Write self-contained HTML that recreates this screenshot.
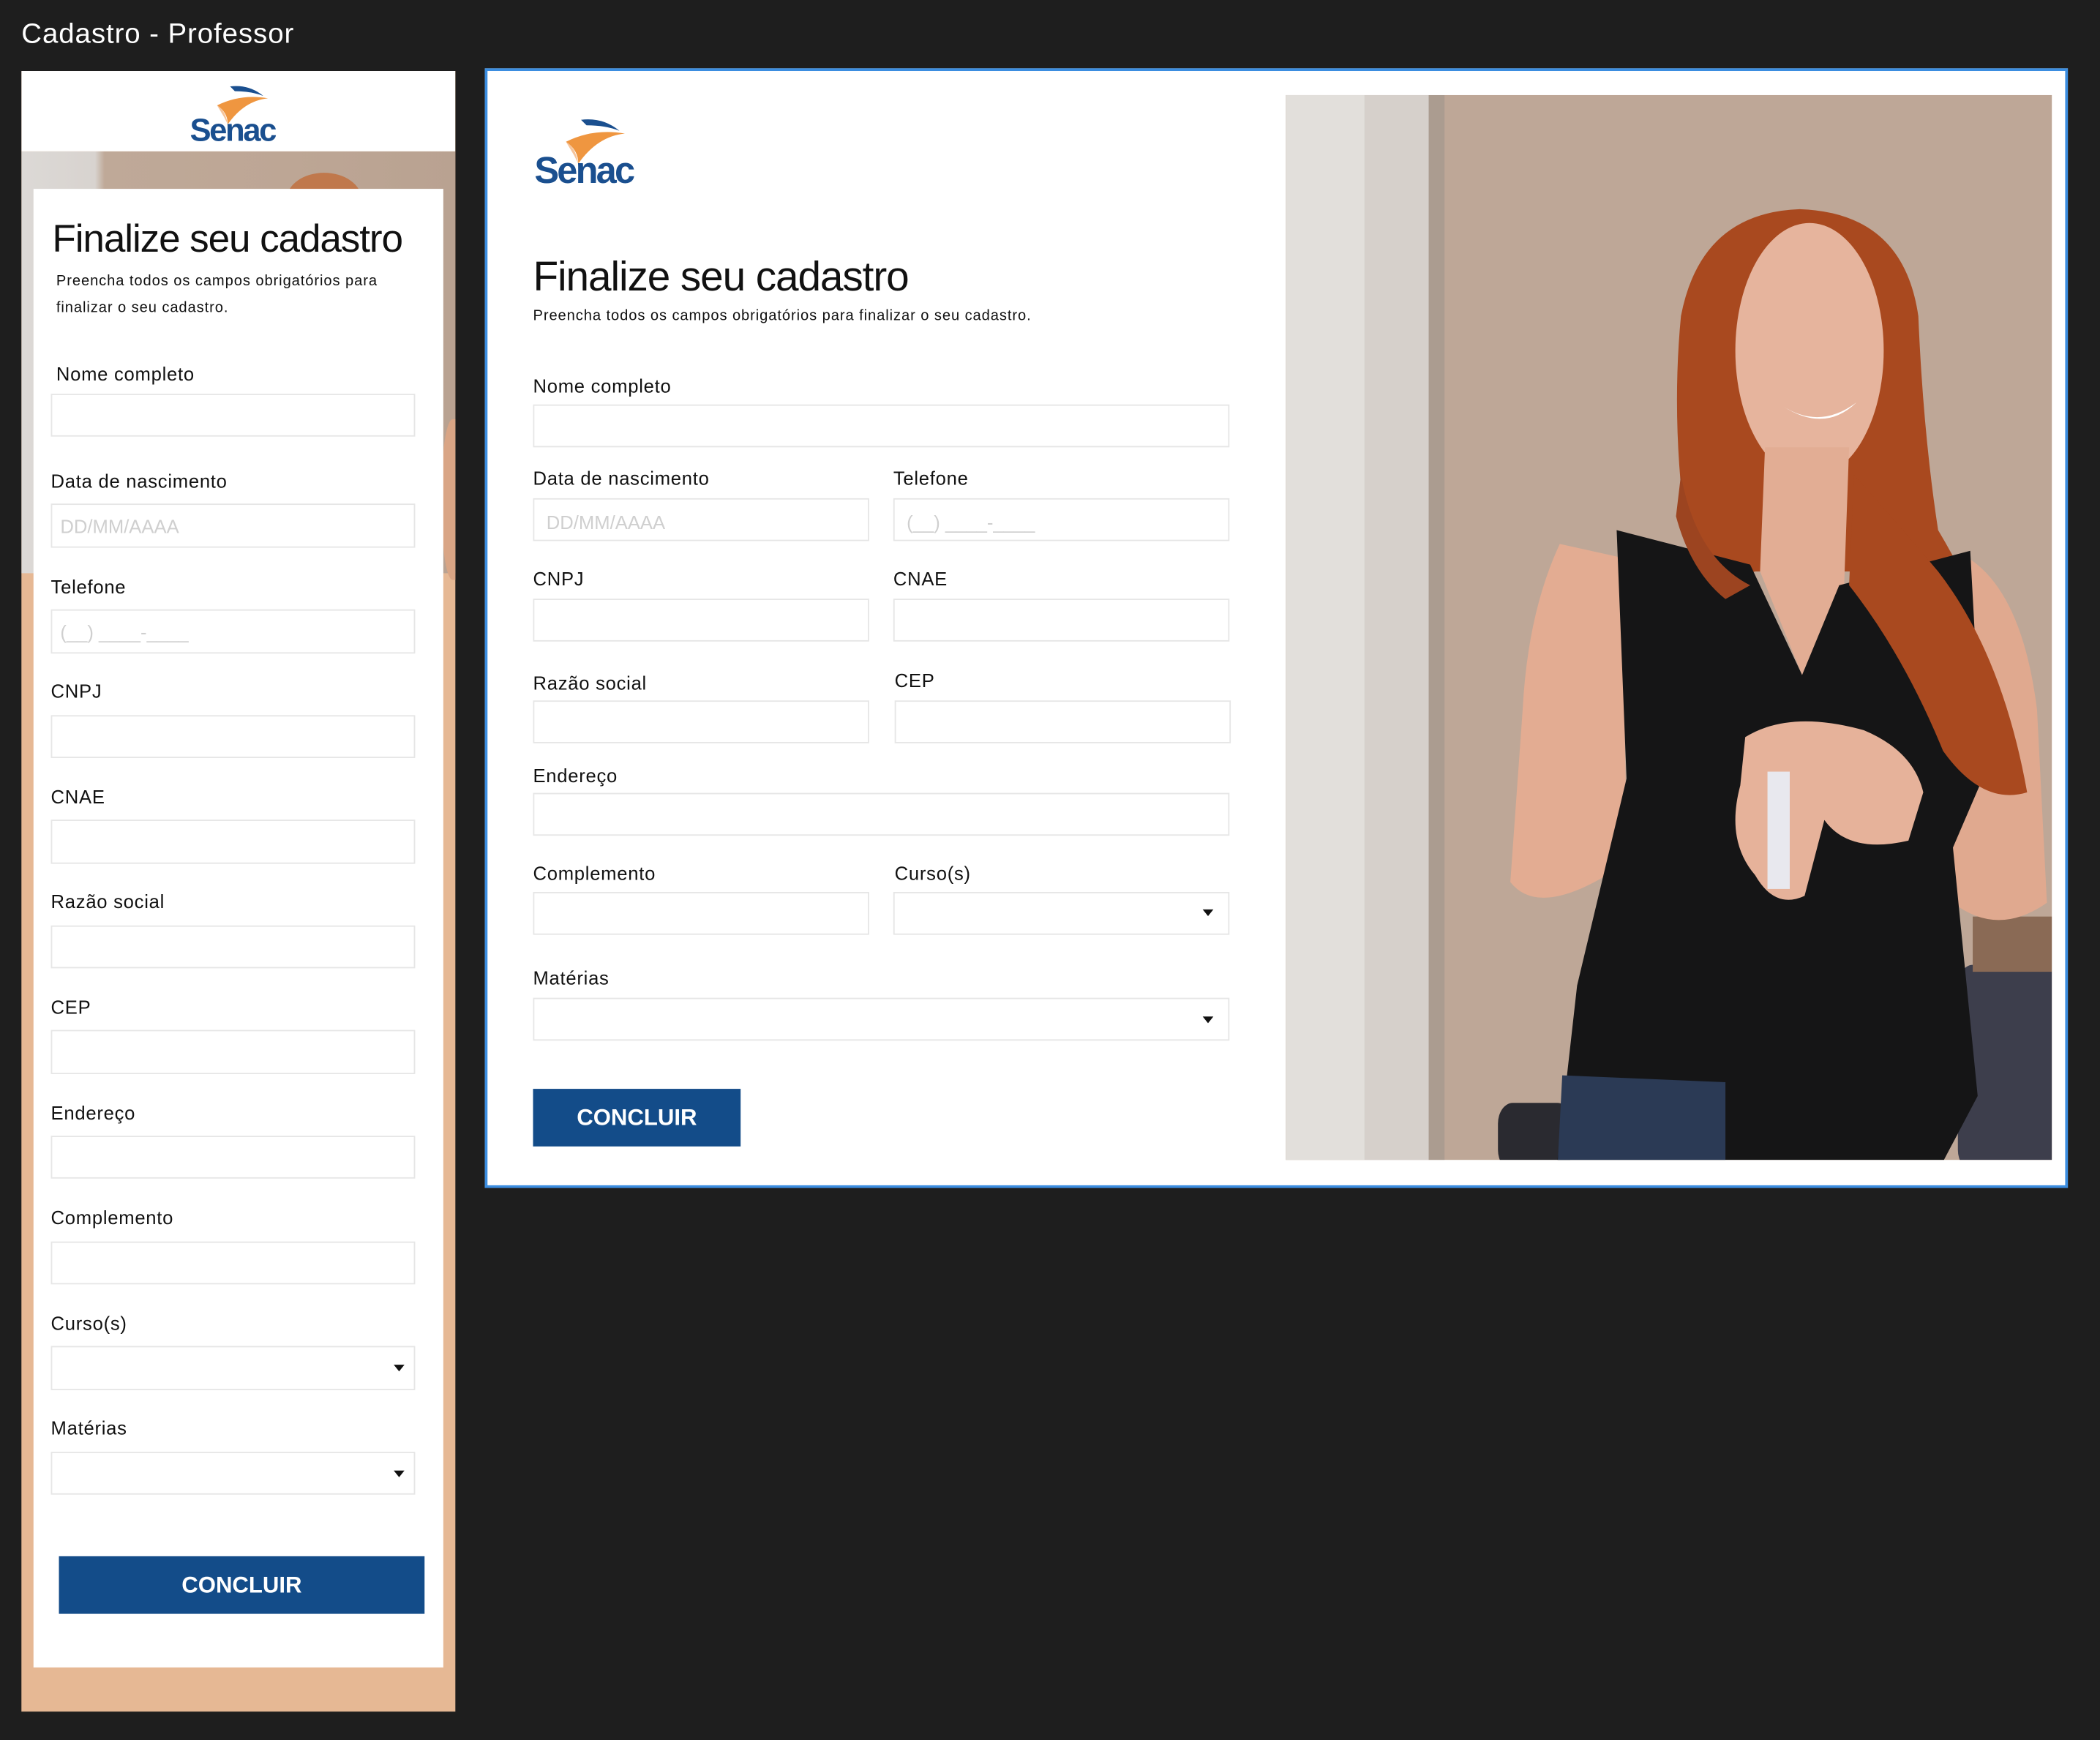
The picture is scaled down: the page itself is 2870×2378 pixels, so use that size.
<!DOCTYPE html>
<html><head><meta charset="utf-8">
<style>
html,body{margin:0;padding:0;}
body{width:2870px;height:2378px;overflow:hidden;background:#1e1e1e;font-family:"Liberation Sans",Arial,sans-serif;}
#w{position:absolute;left:0;top:0;width:1568px;height:1299px;transform:scale(1.83036);transform-origin:0 0;}
.a{position:absolute;}
.t{position:absolute;font-size:14px;color:#111;line-height:16px;white-space:nowrap;letter-spacing:0.4px;}
.in{position:absolute;height:31px;border:1px solid #e6e6e6;background:#fff;box-sizing:border-box;}
.ph{position:absolute;font-size:14px;color:#cfcfcf;line-height:16px;white-space:nowrap;}
.car{position:absolute;width:0;height:0;border-left:4px solid transparent;border-right:4px solid transparent;border-top:5px solid #111;}
.btn{position:absolute;background:#134c89;color:#fff;font-weight:bold;font-size:17px;text-align:center;}
.h{position:absolute;color:#111;white-space:nowrap;letter-spacing:-0.6px;}
.sub{position:absolute;font-size:11px;color:#111;white-space:nowrap;letter-spacing:0.5px;}
</style></head><body>
<div id="w">
<div class="a" style="left:16px;top:14px;font-size:21px;color:#fff;letter-spacing:0.5px;">Cadastro - Professor</div>

<!-- MOBILE -->
<div class="a" style="left:16px;top:53px;width:324px;height:1225px;background:#e6b894;overflow:hidden;">
  <div class="a" style="left:0;top:60px;width:324px;height:315px;background:linear-gradient(90deg,#dcd9d6 0,#d8d3cf 55px,#bfa998 62px,#bda695 200px,#b9a291 324px);"></div>
  <div class="a" style="left:198px;top:76px;width:56px;height:40px;border-radius:50%;background:#c0784c;"></div>
  <div class="a" style="left:314px;top:260px;width:20px;height:120px;border-radius:40%;background:#d9a585;"></div>
  <div class="a" style="left:0;top:0;width:324px;height:60px;background:#fff;"></div>
</div>
<svg class="a" style="left:140px;top:60px" width="76" height="48" viewBox="0 0 86 52">
  <path d="M36 4 Q52 2 64 12 Q54 8 40 8 Z" fill="#1a4f8f"/>
  <path d="M25 20 Q45 10 68 14 Q48 16 34 36 Q34 26 25 20 Z" fill="#ef9640"/>
  <path d="M25 20 Q32 24 34 36 L31 30 Z" fill="#f6c49a"/>
  <text x="2" y="50" font-family="Liberation Sans" font-weight="bold" font-size="27" fill="#1a4f8f" letter-spacing="-1.5">Senac</text>
</svg>
<div class="a" style="left:25px;top:141px;width:306px;height:1104px;background:#fff;"></div>
<div class="h" style="left:39px;top:163px;font-size:29px;">Finalize seu cadastro</div>
<div class="sub" style="left:42px;top:200px;line-height:20px;">Preencha todos os campos obrigatórios para<br>finalizar o seu cadastro.</div>

<div class="t" style="left:42px;top:271px;">Nome completo</div><div class="in" style="left:38px;top:294px;width:272px;height:32px;"></div>
<div class="t" style="left:38px;top:351px;">Data de nascimento</div><div class="in" style="left:38px;top:376px;width:272px;height:33px;"></div><div class="ph" style="left:45px;top:385px;">DD/MM/AAAA</div>
<div class="t" style="left:38px;top:430px;">Telefone</div><div class="in" style="left:38px;top:455px;width:272px;height:33px;"></div><div class="ph" style="left:45px;top:464px;">(__) ____-____</div>
<div class="t" style="left:38px;top:508px;">CNPJ</div><div class="in" style="left:38px;top:534px;width:272px;height:32px;"></div>
<div class="t" style="left:38px;top:587px;">CNAE</div><div class="in" style="left:38px;top:612px;width:272px;height:33px;"></div>
<div class="t" style="left:38px;top:665px;">Razão social</div><div class="in" style="left:38px;top:691px;width:272px;height:32px;"></div>
<div class="t" style="left:38px;top:744px;">CEP</div><div class="in" style="left:38px;top:769px;width:272px;height:33px;"></div>
<div class="t" style="left:38px;top:823px;">Endereço</div><div class="in" style="left:38px;top:848px;width:272px;height:32px;"></div>
<div class="t" style="left:38px;top:901px;">Complemento</div><div class="in" style="left:38px;top:927px;width:272px;height:32px;"></div>
<div class="t" style="left:38px;top:980px;">Curso(s)</div><div class="in" style="left:38px;top:1005px;width:272px;height:33px;"></div><div class="car" style="left:294px;top:1019px;"></div>
<div class="t" style="left:38px;top:1058px;">Matérias</div><div class="in" style="left:38px;top:1084px;width:272px;height:32px;"></div><div class="car" style="left:294px;top:1098px;"></div>
<div class="btn" style="left:44px;top:1162px;width:273px;height:43px;line-height:43px;">CONCLUIR</div>

<!-- DESKTOP -->
<div class="a" style="left:362px;top:51px;width:1182px;height:836px;border:2px solid #3b8de0;box-sizing:border-box;background:#fff;"></div>
<svg class="a" style="left:397px;top:85px" width="88" height="54" viewBox="0 0 86 52">
  <path d="M36 4 Q52 2 64 12 Q54 8 40 8 Z" fill="#1a4f8f"/>
  <path d="M25 20 Q45 10 68 14 Q48 16 34 36 Q34 26 25 20 Z" fill="#ef9640"/>
  <path d="M25 20 Q32 24 34 36 L31 30 Z" fill="#f6c49a"/>
  <text x="2" y="50" font-family="Liberation Sans" font-weight="bold" font-size="27" fill="#1a4f8f" letter-spacing="-1.5">Senac</text>
</svg>
<div class="h" style="left:398px;top:189px;font-size:31px;">Finalize seu cadastro</div>
<div class="sub" style="left:398px;top:230px;">Preencha todos os campos obrigatórios para finalizar o seu cadastro.</div>

<div class="t" style="left:398px;top:280px;">Nome completo</div><div class="in" style="left:398px;top:302px;width:520px;height:32px;"></div>
<div class="t" style="left:398px;top:349px;">Data de nascimento</div><div class="in" style="left:398px;top:372px;width:251px;height:32px;"></div><div class="ph" style="left:408px;top:382px;">DD/MM/AAAA</div>
<div class="t" style="left:667px;top:349px;">Telefone</div><div class="in" style="left:667px;top:372px;width:251px;height:32px;"></div><div class="ph" style="left:677px;top:382px;">(__) ____-____</div>
<div class="t" style="left:398px;top:424px;">CNPJ</div><div class="in" style="left:398px;top:447px;width:251px;height:32px;"></div>
<div class="t" style="left:667px;top:424px;">CNAE</div><div class="in" style="left:667px;top:447px;width:251px;height:32px;"></div>
<div class="t" style="left:398px;top:502px;">Razão social</div><div class="in" style="left:398px;top:523px;width:251px;height:32px;"></div>
<div class="t" style="left:668px;top:500px;">CEP</div><div class="in" style="left:668px;top:523px;width:251px;height:32px;"></div>
<div class="t" style="left:398px;top:571px;">Endereço</div><div class="in" style="left:398px;top:592px;width:520px;height:32px;"></div>
<div class="t" style="left:398px;top:644px;">Complemento</div><div class="in" style="left:398px;top:666px;width:251px;height:32px;"></div>
<div class="t" style="left:668px;top:644px;">Curso(s)</div><div class="in" style="left:667px;top:666px;width:251px;height:32px;"></div><div class="car" style="left:898px;top:679px;"></div>
<div class="t" style="left:398px;top:722px;">Matérias</div><div class="in" style="left:398px;top:745px;width:520px;height:32px;"></div><div class="car" style="left:898px;top:759px;"></div>
<div class="btn" style="left:398px;top:813px;width:155px;height:43px;line-height:43px;">CONCLUIR</div>

<!-- PHOTO -->
<div class="a" style="left:960px;top:71px;width:572px;height:795px;overflow:hidden;background:#bca595;">
<svg class="a" style="left:-4px;top:-5px" width="579" height="808" viewBox="0 0 1568 1568" preserveAspectRatio="none">
  <rect x="0" y="0" width="1568" height="1568" fill="#bea797"/>
  <rect x="0" y="0" width="300" height="1568" fill="#e2dfdb"/>
  <rect x="170" y="0" width="130" height="1568" fill="#d6d0cb"/>
  <rect x="300" y="0" width="32" height="1568" fill="#ab9c90"/>
  <rect x="1370" y="1270" width="198" height="298" rx="30" fill="#3d3e4c"/>
  <rect x="1400" y="1200" width="168" height="80" fill="#8a6a55"/>
  <rect x="440" y="1470" width="150" height="98" rx="30" fill="#2a2a30"/>
  <path d="M810 330 Q850 180 1050 175 Q1260 180 1290 330 Q1300 500 1330 640 Q1480 820 1510 1020 Q1420 1040 1330 960 Q1250 800 1180 700 L960 700 Q880 720 820 640 Q790 480 810 330 Z" fill="#a9491f"/>
  <ellipse cx="1070" cy="380" rx="150" ry="185" fill="#e6b49d"/>
  <path d="M980 520 L1150 520 L1140 720 L1055 850 L970 700 Z" fill="#e2ad94"/>
  <path d="M1015 460 Q1090 495 1165 455 Q1100 500 1015 460 Z" fill="#fff"/>
  <path d="M565 660 Q500 760 490 900 L465 1150 Q520 1200 660 1140 L1000 1100 L1080 1060 L1000 980 L700 1080 L690 680 Z" fill="#e3ac92"/>
  <path d="M1390 680 Q1500 730 1530 900 L1550 1180 Q1450 1230 1360 1180 L1150 1060 L1060 960 L1250 940 L1380 1000 Z" fill="#e0a98f"/>
  <path d="M680 640 L950 690 L1055 850 L1130 720 L1395 670 L1420 1000 L1360 1100 L1410 1460 L1340 1555 L560 1555 L600 1300 L660 1120 L700 1000 Z" fill="#151516"/>
  <path d="M1160 560 Q1260 640 1330 700 Q1460 820 1510 1020 Q1420 1040 1340 960 Q1260 820 1150 720 Z" fill="#a9491f"/>
  <path d="M810 560 Q840 680 950 720 L900 740 Q830 700 800 620 Z" fill="#9c4420"/>
  <path d="M940 940 Q1030 900 1180 930 Q1280 960 1300 1020 L1270 1090 Q1150 1110 1100 1060 L1060 1170 Q1000 1190 960 1140 Q900 1090 930 1010 Z" fill="#e6b29a"/>
  <rect x="985" y="990" width="45" height="170" fill="#e8e8ee"/>
  <path d="M570 1430 L900 1440 L900 1568 L560 1568 Z" fill="#2b3a55"/>
</svg>
</div>
</div>
</body></html>
